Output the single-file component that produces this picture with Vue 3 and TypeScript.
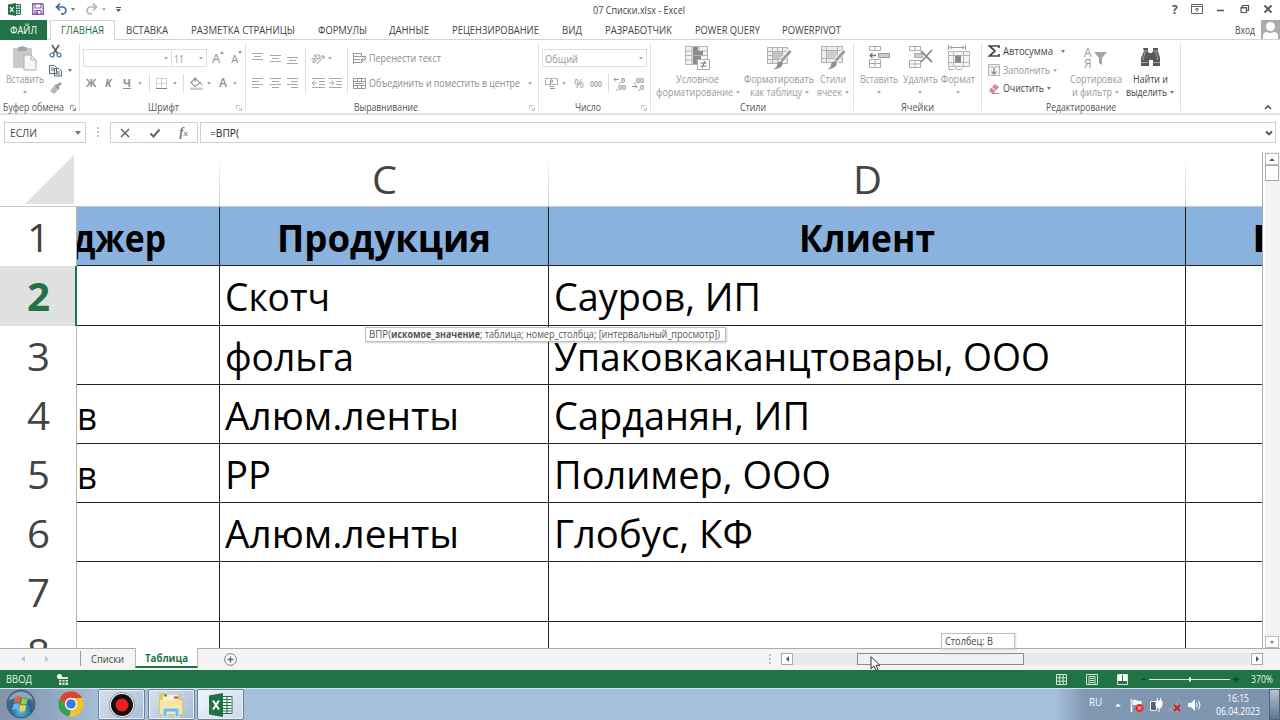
<script setup lang="ts">
import type { Directive } from 'vue'

/* Sets a label to a given advance width so that the chrome keeps its metrics. */
const vFit: Directive<HTMLElement, number> = {
  mounted(el, { value }) {
    const natural = el.getBoundingClientRect().width
    if (!natural) return
    el.style.transform = `scaleX(${value / natural})`
    el.style.marginRight = `${value - natural}px`
  },
}

interface Label { t: string; w: number }
interface Row { n: string; b?: Label; c?: Label; d?: Label; e?: Label }

const tabs: Label[] = [
  { t: 'ВСТАВКА', w: 42 },
  { t: 'РАЗМЕТКА СТРАНИЦЫ', w: 104 },
  { t: 'ФОРМУЛЫ', w: 49 },
  { t: 'ДАННЫЕ', w: 40 },
  { t: 'РЕЦЕНЗИРОВАНИЕ', w: 87 },
  { t: 'ВИД', w: 20 },
  { t: 'РАЗРАБОТЧИК', w: 67 },
  { t: 'POWER QUERY', w: 65 },
  { t: 'POWERPIVOT', w: 59 },
]

const rows: Row[] = [
  { n: '1', b: { t: 'джер', w: 93 }, c: { t: 'Продукция', w: 214 }, d: { t: 'Клиент', w: 136 }, e: { t: 'Н', w: 32 } },
  { n: '2', c: { t: 'Скотч', w: 105 }, d: { t: 'Сауров, ИП', w: 207 } },
  { n: '3', c: { t: 'фольга', w: 129 }, d: { t: 'Упаковкаканцтовары, ООО', w: 496 } },
  { n: '4', b: { t: 'в', w: 20 }, c: { t: 'Алюм.ленты', w: 234 }, d: { t: 'Сарданян, ИП', w: 256 } },
  { n: '5', b: { t: 'в', w: 20 }, c: { t: 'PP', w: 46 }, d: { t: 'Полимер, ООО', w: 277 } },
  { n: '6', c: { t: 'Алюм.ленты', w: 234 }, d: { t: 'Глобус, КФ', w: 199 } },
  { n: '7' },
  { n: '8' },
]
</script>

<template>
  <div class="window">
    <header class="title">
      <svg class="i13" viewBox="0 0 13 13"><path d="M7 1.5h5.5v10H7z" fill="#fff" stroke="#217346" /><path d="M8 4h4M8 6.5h4M8 9h4M10 2v9" stroke="#217346" /><path d="M0 1.5 8 0v13L0 11.5z" fill="#217346" /><path d="m2 4 3.5 5M5.500 4 2 9" stroke="#fff" stroke-width="1.300" /></svg>
      <svg class="i12 ml11" viewBox="0 0 12 12"><path d="M.7.7h9.800l.8.8v9.800H.7z" fill="#fff" stroke="#8a5fa6" stroke-width="1.400" /><path d="M3 1v4h6V1M3 11V7.500h6V11" fill="none" stroke="#8a5fa6" stroke-width="1.200" /><path d="M4 8.500h2V11H4z" fill="#8a5fa6" /></svg>
      <svg class="i12 ml11" viewBox="0 0 12 12"><path d="M1.500 4h6a3.300 3.300 0 0 1 0 6.800H6M5 .7 1.500 4 5 7.300" fill="none" stroke="#3b6fa8" stroke-width="1.700" /></svg>
      <i class="dd dark ml4" />
      <svg class="i12 ml11" viewBox="0 0 12 12"><path d="M10.500 4h-6a3.300 3.300 0 0 0 0 6.800H6M7 .7 10.500 4 7 7.300" fill="none" stroke="#b5b5b5" stroke-width="1.700" /></svg>
      <i class="dd ml4" />
      <svg class="qa" viewBox="0 0 5 5"><path d="M0 .5h5" stroke="#555" /><path d="M0 2h5L2.500 5z" fill="#555" /></svg>
      <span class="doc"><span v-fit="92" class="fit">07 Списки.xlsx - Excel</span></span>
      <div class="winbtns">
        <b class="q">?</b>
        <svg class="i12" viewBox="0 0 12 12"><path d="M.5 1.500h11v9H.5zM.5 3.500h11" fill="none" stroke="#666" /><path d="M6 9V5.500M4 7l2-2 2 2" fill="none" stroke="#666" /></svg>
        <svg class="i10" viewBox="0 0 10 10"><path d="M1 6.500h7" stroke="#555" stroke-width="1.600" /></svg>
        <svg class="i10" viewBox="0 0 10 10"><path d="M2.500 3.500v-2h6v5h-2M1 3.500h5.500v5H1zM1 4h5.500" fill="none" stroke="#555" stroke-width="1.200" /></svg>
        <svg class="i10" viewBox="0 0 10 10"><path d="m1.500 1.500 7 7m0-7-7 7" stroke="#555" stroke-width="1.800" /></svg>
      </div>
    </header>

    <nav class="tabs">
      <div class="file"><span v-fit="27" class="fit">ФАЙЛ</span></div>
      <div class="home"><span v-fit="43" class="fit">ГЛАВНАЯ</span></div>
      <span v-for="t in tabs" :key="t.t" class="tab"><span v-fit="t.w" class="fit">{{ t.t }}</span></span>
      <span class="login"><span v-fit="20" class="fit">Вход</span></span>
      <svg class="avatar" viewBox="0 0 19 19"><path d="M0 0h19v19H0z" fill="#ababab" /><circle cx="9.500" cy="6.500" r="4.500" fill="#fff" /><path d="M2 19v-3q0-4 4-4 3.500 2 7 0 4 0 4 4v3z" fill="#fff" /></svg>
    </nav>

    <section class="ribbon">
      <div class="group clip">
        <div class="body">
          <div class="big w50">
            <svg class="bi" viewBox="0 0 25 26"><path d="M1 3h19v20H1z" fill="#c9c9c9" /><path d="M6 2h3q1.500-3 3 0h3v4H6z" fill="#a5a5a5" /><path d="M12 10h7l5 5v10H12z" fill="#f7f7f7" stroke="#b0b0b0" /><path d="M19 10v5h5" fill="none" stroke="#b0b0b0" /></svg>
            <span class="ln"><span v-fit="38" class="fit">Вставить</span></span>
            <span class="ln"><i class="dd" /></span>
          </div>
          <div class="three">
            <div><svg class="i13" viewBox="0 0 13 13"><path d="m3 0 6 9M10 0 4 9" stroke="#555" stroke-width="1.500" /><circle cx="3" cy="10" r="2" fill="none" stroke="#41719c" stroke-width="1.200" /><circle cx="10" cy="10" r="2" fill="none" stroke="#41719c" stroke-width="1.200" /></svg></div>
            <div><svg class="i13" viewBox="0 0 13 13"><path d="M.5 1.500h5l2 2v6h-7zM5.500 4.500h4.500l2.500 2.500v5h-7z" fill="#fff" stroke="#666" /><path d="M2 4h3M2 6h3M7 8h4M7 10h4" stroke="#41719c" /></svg><i class="dd dark ml6" /></div>
            <div><svg class="i13" viewBox="0 0 13 13"><path d="m12 1-4 3M6 3l4 4" stroke="#999" stroke-width="2.500" /><path d="m5 4 4 4-4 4-4-3z" fill="#b9b9b9" /></svg></div>
          </div>
        </div>
        <div class="cap"><span v-fit="61" class="fit ml3">Буфер обмена</span><svg class="launch on" viewBox="0 0 7 7"><path d="M.5 5V.5H5M3 3l3 3M6.500 3v3.500H3" fill="none" stroke="currentColor" /></svg></div>
      </div>

      <div class="group font">
        <div class="two">
          <div class="r">
            <div class="combo cf"><i class="dd" /></div><div class="combo cs"><span v-fit="10" class="fit">11</span><i class="dd" /></div>
            <span class="let ml5">A</span><i class="tri up" /><span class="let s ml7">A</span><i class="tri dn" />
          </div>
          <div class="r">
            <b class="let k1">Ж</b><b class="let k2"><em>К</em></b><b class="let k3"><u>Ч</u></b><i class="dd ml6" /><i class="vs ml7" />
            <svg class="i11 ml6" viewBox="0 0 11 11"><path d="M.5.5h10v10H.5zM5.500.5v10M.5 5.500h10" fill="none" stroke="#aaa" stroke-dasharray="1 1" /><path d="M0 10.500h11" stroke="#888" /></svg><i class="dd ml6" /><i class="vs ml6" />
            <svg class="i13 ml6" viewBox="0 0 13 13"><path d="m5 1 5 5-5 3.500-4-4zM5 0v5M10 5l2 3" fill="none" stroke="#999" stroke-width="1.200" /><path d="M0 10.500h13V13H0z" fill="#ccc" /></svg><i class="dd ml4" />
            <b class="let fc ml8">А</b><i class="dd ml6" />
          </div>
        </div>
        <div class="cap mid"><span v-fit="31" class="fit nudge">Шрифт</span><svg class="launch" viewBox="0 0 7 7"><path d="M.5 5V.5H5M3 3l3 3M6.500 3v3.500H3" fill="none" stroke="currentColor" /></svg></div>
      </div>

      <div class="group align">
        <div class="two">
          <div class="r">
            <svg class="al ml6" viewBox="0 0 11 12"><path d="M0 1.500h11M2 4.500h7M0 7.500h11" /></svg>
            <svg class="al ml7" viewBox="0 0 11 12"><path d="M0 3.500h11M2 6.500h7M0 9.500h11" /></svg>
            <svg class="al ml6" viewBox="0 0 11 12"><path d="M0 5.500h11M2 8.500h7M0 11.500h11" /></svg>
            <i class="vs tall ml7" />
            <svg class="i13 ml6" viewBox="0 0 13 13"><text x="-1" y="9" font-size="9" fill="#888" transform="rotate(-38 4 7)">ab</text><path d="m5 12 7-8M9 4h3v3" fill="none" stroke="#999" /></svg><i class="dd ml3" /><i class="vs tall ml15" />
            <svg class="i13 ml5" viewBox="0 0 13 13"><path d="M0 1.500h9M0 4.500h13M0 7.500h7M0 10.500h9M.5 1v11M8.500 1v3" fill="none" stroke="#9a9a9a" /><path d="M12 4v4H8M10 6 8 8l2 2" fill="none" stroke="#888" /></svg>
            <span class="g ml3"><span v-fit="72" class="fit">Перенести текст</span></span>
          </div>
          <div class="r">
            <svg class="al ml6" viewBox="0 0 11 12"><path d="M0 1.500h11M0 4.500h7M0 7.500h11M0 10.500h7" /></svg>
            <svg class="al ml7" viewBox="0 0 11 12"><path d="M0 1.500h11M2 4.500h7M0 7.500h11M2 10.500h7" /></svg>
            <svg class="al ml6" viewBox="0 0 11 12"><path d="M0 1.500h11M4 4.500h7M0 7.500h11M4 10.500h7" /></svg>
            <i class="vs ghost ml7" />
            <svg class="al w13 ml6" viewBox="0 0 13 12"><path d="M0 1.500h13M7 4.500h6M7 7.500h6M0 10.500h13M5 6H0M2.500 3.500 0 6l2.500 2.500" /></svg>
            <svg class="al w13 ml4" viewBox="0 0 13 12"><path d="M0 1.500h13M7 4.500h6M7 7.500h6M0 10.500h13M5 6H0M2.500 3.500 5 6 2.500 8.500" /></svg>
            <i class="vs ghost ml5" />
            <svg class="i13 ml5" viewBox="0 0 13 13"><path d="M.5 1.500h12v10H.5zM.5 4.500h12M.5 8.500h12M4.500 1v3M8.500 1v3M4.500 9v3M8.500 9v3M2 6.500h9" fill="none" stroke="#999" /></svg>
            <span class="g ml3"><span v-fit="151" class="fit">Объединить и поместить в центре</span></span><i class="dd ml8" />
          </div>
        </div>
        <div class="cap"><span v-fit="64" class="fit ml108">Выравнивание</span><svg class="launch" viewBox="0 0 7 7"><path d="M.5 5V.5H5M3 3l3 3M6.500 3v3.500H3" fill="none" stroke="currentColor" /></svg></div>
      </div>

      <div class="group num">
        <div class="two">
          <div class="r"><div class="combo cn"><span v-fit="33" class="fit">Общий</span><i class="dd" /></div></div>
          <div class="r">
            <svg class="i13 ml6" viewBox="0 0 13 13"><path d="M.5 1.500h12v6H.5z" fill="none" stroke="#999" stroke-dasharray="3 1" /><path d="M5.500 7V3h2v2h-2M4 9.500h5M5 11.500h5" fill="none" stroke="#999" /></svg><i class="dd ml4" />
            <span class="pct ml8"><span v-fit="10" class="fit">%</span></span><b class="zeros ml6"><span v-fit="12" class="fit">000</span></b><i class="vs ml6" />
            <svg class="i13 ml5" viewBox="0 0 13 13"><text x="5" y="6" class="dz">,0</text><text x="2" y="13" class="dz">,00</text><path d="M5 2.500H0M2 .5l-2 2 2 2" fill="none" stroke="#999" /></svg>
            <svg class="i13 ml5" viewBox="0 0 13 13"><text x="2" y="6" class="dz">,00</text><text x="6" y="13" class="dz">,0</text><path d="M0 9.500h5M3 7.500l2 2-2 2" fill="none" stroke="#999" /></svg>
          </div>
        </div>
        <div class="cap"><span v-fit="26" class="fit ml36">Число</span><svg class="launch" viewBox="0 0 7 7"><path d="M.5 5V.5H5M3 3l3 3M6.500 3v3.500H3" fill="none" stroke="currentColor" /></svg></div>
      </div>

      <div class="group styles">
        <div class="body">
          <div class="big w88">
            <svg class="bi" viewBox="0 0 25 26"><path d="M.5 1.500h22v18H.5zM.5 6h22M.5 10.500h22M.5 15h22M7 1v18M14 1v18" fill="#f4f4f4" stroke="#b5b5b5" /><path d="M8 2h5v4H8zM8 6h10v4H8zM8 11h8v4H8zM8 15h5v4H8z" fill="#8d8d8d" /><path d="M12.500 14.500h12v10h-12z" fill="#fff" stroke="#aaa" /><path d="M15.500 18h6M15.500 21h6M20 16l-3 7" stroke="#777" /></svg>
            <span class="ln"><span v-fit="43" class="fit">Условное</span></span>
            <span class="ln"><span v-fit="77" class="fit">форматирование</span><i class="dd ml3" /></span>
          </div>
          <div class="big w74">
            <svg class="bi" viewBox="0 0 25 26"><path d="M.5 2.500h20v16H.5zM.5 6.500h20M.5 10.500h20M.5 14.500h20M5.500 2v16M10.500 2v16M15.500 2v16" fill="#eee" stroke="#b0b0b0" /><path d="M6 7h9v7H6z" fill="#c5c5c5" /><path d="m23 6-9 11" stroke="#fff" stroke-width="5" /><path d="m23.500 6-9 10" stroke="#9a9a9a" stroke-width="2.800" /><path d="M14 16q3 1 1 5-4 4-9 3 4-1 4-4t4-4z" fill="#8f8f8f" /></svg>
            <span class="ln"><span v-fit="70" class="fit">Форматировать</span></span>
            <span class="ln"><span v-fit="52" class="fit">как таблицу</span><i class="dd ml3" /></span>
          </div>
          <div class="big w36">
            <svg class="bi" viewBox="0 0 25 26"><path d="M.5 1.500h21v16H.5zM.5 5.500h21M.5 13.500h21M5.500 1v17M16.500 1v17" fill="#eee" stroke="#b0b0b0" /><path d="M6 6h10v7H6z" fill="#cfcfcf" /><path d="m23 6-9 11" stroke="#fff" stroke-width="5" /><path d="m23.500 6-9 10" stroke="#9a9a9a" stroke-width="2.800" /><path d="M14 16q3 1 1 5-4 4-9 3 4-1 4-4t4-4z" fill="#8f8f8f" /></svg>
            <span class="ln"><span v-fit="26" class="fit">Стили</span></span>
            <span class="ln"><span v-fit="25" class="fit">ячеек</span><i class="dd ml3" /></span>
          </div>
        </div>
        <div class="cap mid"><span v-fit="26" class="fit">Стили</span></div>
      </div>

      <div class="group cells">
        <div class="body">
          <div class="big w44">
            <svg class="bi" viewBox="0 0 25 26"><path d="M2.500 1.500h11v4h-11zM8 1v5M2.500 14.500h11v8h-11zM8 14v9M2.500 18.500h11" fill="none" stroke="#aaa" /><path d="M11.500 8.500h11v4h-11z" fill="#ccc" stroke="#999" /><path d="M9 10.500H3M5.500 8 3 10.500 5.500 13" fill="none" stroke="#777" stroke-width="1.300" /></svg>
            <span class="ln"><span v-fit="38" class="fit">Вставить</span></span>
            <span class="ln"><i class="dd" /></span>
          </div>
          <div class="big w38">
            <svg class="bi" viewBox="0 0 25 26"><path d="M1.500 1.500h11v4h-11zM7 1v5M1.500 15.500h11v7h-11zM7 15v8M1.500 19h11" fill="none" stroke="#aaa" /><path d="M6.500 8.500h8v4h-8z" fill="#ccc" stroke="#aaa" /><path d="m13 6 11 11M24 5 13 17" stroke="#8b8b8b" stroke-width="1.800" /></svg>
            <span class="ln"><span v-fit="35" class="fit">Удалить</span></span>
            <span class="ln"><i class="dd" /></span>
          </div>
          <div class="big w38">
            <svg class="bi" viewBox="0 0 25 26"><path d="M2.500 0v5M19.500 0v5M4 2.500h14M6 .5l-2 2 2 2M16 .5l2 2-2 2" fill="none" stroke="#999" /><path d="M2.500 6.500h21v15h-21zM2.500 10.500h21M2.500 17.500h21M7.500 6v16M17.500 6v16" fill="#f5f5f5" stroke="#b5b5b5" /><path d="M9 10.500h6v7H9z" fill="#888" /><path d="M3 22.500v2h5l1.500-2 1.500 2h4l2-2" fill="none" stroke="#aaa" /></svg>
            <span class="ln"><span v-fit="34" class="fit">Формат</span></span>
            <span class="ln"><i class="dd" /></span>
          </div>
        </div>
        <div class="cap"><span v-fit="33" class="fit ml47">Ячейки</span></div>
      </div>

      <div class="group edit">
        <div class="body">
          <div class="three e3">
            <div><svg class="i12" viewBox="0 0 12 12"><path d="M11 3V1H1.500L7 6l-5.500 5H11V9" fill="none" stroke="#444" stroke-width="1.700" /></svg><span v-fit="50" class="fit dk ml3">Автосумма</span><i class="dd dark ml8" /></div>
            <div><svg class="i12" viewBox="0 0 12 12"><path d="M.5.5h11v11H.5zM.5 3h11" fill="#f3f3f3" stroke="#b5b5b5" /><path d="M6 4v6M3.500 7.500 6 10l2.500-2.500" fill="none" stroke="#888" stroke-width="1.300" /></svg><span v-fit="47" class="fit ml3">Заполнить</span><i class="dd ml3" /></div>
            <div><svg class="i12" viewBox="0 0 12 12"><path d="m7 1 4 3-5 6H3L1 7z" fill="#d98a9e" /><path d="m3.500 4 4 3.500" stroke="#fff" /><path d="M4 10.500h7" stroke="#888" /></svg><span v-fit="41" class="fit dk ml3">Очистить</span><i class="dd dark ml3" /></div>
          </div>
          <div class="big w60">
            <svg class="bi" viewBox="0 0 25 26"><text x="1" y="12" class="az">А</text><text x="1" y="23" class="az">Я</text><path d="M11 7h13l-5 6v7l-3-2v-5z" fill="#a5a5a5" /></svg>
            <span class="ln"><span v-fit="52" class="fit">Сортировка</span></span>
            <span class="ln"><span v-fit="40" class="fit">и фильтр</span><i class="dd ml3" /></span>
          </div>
          <div class="big find dk">
            <svg class="bi" viewBox="0 0 25 26"><path d="M5 3h5v3l1 2h3l1-2V3h5v3l2 7v8h-7v-6h-4v6H3v-8l3-7z" fill="#595959" /><path d="M3 17.500h7M15 17.500h7M5 6h5M15 6h5M7 7l-2 8M18 7l2 8" stroke="#bbb" stroke-width=".8" /></svg>
            <span class="ln"><span v-fit="35" class="fit">Найти и</span></span>
            <span class="ln"><span v-fit="41" class="fit">выделить</span><i class="dd dark ml3" /></span>
          </div>
        </div>
        <div class="cap"><span v-fit="70" class="fit ml64">Редактирование</span></div>
      </div>
      <svg class="collapse" viewBox="0 0 8 6"><path d="m1 5 3-3 3 3" fill="none" stroke="#555" stroke-width="1.600" /></svg>
    </section>

    <section class="formula">
      <div class="fbox name"><span v-fit="27" class="fit">ЕСЛИ</span><i class="dd dark big5" /></div>
      <svg class="dots" viewBox="0 0 3 12"><path d="M1 2h1.500M1 6h1.500M1 10h1.500" stroke="#999" stroke-width="1.500" /></svg>
      <div class="fbox fb">
        <svg class="i10" viewBox="0 0 10 10"><path d="m1 1 8 8m0-8L1 9" stroke="#666" stroke-width="1.500" /></svg>
        <svg class="i10" viewBox="0 0 10 10"><path d="m.5 5.500 3 3 6-7" fill="none" stroke="#666" stroke-width="2" /></svg>
        <i class="fx">f<small>x</small></i>
      </div>
      <div class="fbox input"><span v-fit="29" class="fit">=ВПР(</span><svg class="i7" viewBox="0 0 8 8"><path d="m1 2.500 3 3 3-3" fill="none" stroke="#555" stroke-width="1.800" /></svg></div>
    </section>

    <main class="sheet">
      <div class="grid">
        <div class="heads">
          <div class="corner"><svg viewBox="0 0 49 49"><path d="M49 0v49H0z" fill="#e0e0e0" /></svg></div>
          <div class="h cb" /><div class="h cc"><span v-fit="25" class="fit">C</span></div><div class="h cd"><span v-fit="29" class="fit">D</span></div><div class="h ce" />
        </div>
        <div v-for="(r, i) in rows" :key="r.n" class="row" :class="{ head: i === 0, active: i === 1, tall: i === 1 || i === 6 }">
          <div class="rn"><span v-fit="23" class="fit">{{ r.n }}</span></div>
          <div class="c cb"><span v-if="r.b" v-fit="r.b.w" class="fit">{{ r.b.t }}</span></div>
          <div class="c cc"><span v-if="r.c" v-fit="r.c.w" class="fit">{{ r.c.t }}</span></div>
          <div class="c cd"><span v-if="r.d" v-fit="r.d.w" class="fit">{{ r.d.t }}</span></div>
          <div class="c ce"><span v-if="r.e" v-fit="r.e.w" class="fit">{{ r.e.t }}</span></div>
        </div>
      </div>
      <div class="vscroll">
        <div class="sb"><i class="dd upw" /></div><div class="vthumb" /><div class="vtrack" /><div class="sb"><i class="dd dark" /></div>
      </div>
      <div class="hint"><span v-fit="22" class="fit">ВПР(</span><b v-fit="89" class="fit">искомое_значение</b><span v-fit="240" class="fit">; таблица; номер_столбца; [интервальный_просмотр])</span></div>
    </main>

    <footer class="sheets">
      <svg class="nav" viewBox="0 0 28 8"><path d="M4 1v6L0 4zM24 1v6l4-3z" fill="#c2c2c2" /></svg>
      <div class="st"><span v-fit="33" class="fit">Списки</span></div>
      <div class="st on"><span v-fit="43" class="fit">Таблица</span></div>
      <svg class="plus" viewBox="0 0 13 13"><circle cx="6.500" cy="6.500" r="5.800" fill="#fff" stroke="#777" /><path d="M6.500 3.500v6M3.500 6.500h6" stroke="#666" stroke-width="1.400" /></svg>
      <svg class="dots hd" viewBox="0 0 3 12"><path d="M1 2h1.500M1 6h1.500M1 10h1.500" stroke="#999" stroke-width="1.500" /></svg>
      <div class="hb"><i class="side l" /></div>
      <div class="htrack"><div class="hthumb" /></div>
      <div class="hb"><i class="side rr" /></div>
      <div class="coltip"><span v-fit="48" class="fit">Столбец: B</span></div>
      <svg class="cursor" viewBox="0 0 11 16"><path d="M1 .8v12l3-2.800 2 4.500 2-1-2-4.200h4z" fill="#fff" stroke="#333" /></svg>
    </footer>

    <div class="status">
      <span v-fit="26" class="fit ml6">ВВОД</span>
      <svg class="macro" viewBox="0 0 11 11"><path d="M2 3h9v8H2z" fill="#dcebe1" /><path d="M2 5.500h9M2 8h9M5 5v6M8 5v6" stroke="#217346" /><circle cx="2.500" cy="2.500" r="2.500" fill="#fff" /></svg>
      <svg class="views" viewBox="0 0 72 11"><path d="M.5.5h10v10H.5zM0 3.800h11M0 7.200h11M3.800 0v11M7.200 0v11M30.500.5h11v10h-11zM33 2.500h6v8h-6zM34 4.500h4M34 6.500h4M34 8.500h4M61.500.5h10v10h-10z" fill="none" stroke="#d6e8dc" /><path d="M62 1h4v6h-4zM67 1h4v6h-4z" fill="#fff" /></svg>
      <svg class="slider" viewBox="0 0 98 11"><path d="M0 5.500h5M92 5.500h6M95 2.500v6" stroke="#0e4a28" stroke-width="1.500" /><path d="M8 5.500h81" stroke="#d6e8dc" /><path d="M49 3.500v4" stroke="#fff" stroke-width="2" /></svg>
      <span v-fit="22" class="fit zoom">370%</span>
    </div>

    <div class="taskbar">
      <svg class="start" viewBox="0 0 30 30">
        <defs><radialGradient id="orb" cx=".5" cy=".75" r=".75"><stop offset="0" stop-color="#5cc3ee" /><stop offset=".5" stop-color="#24658f" /><stop offset="1" stop-color="#5f7f99" /></radialGradient></defs>
        <circle cx="15" cy="15" r="14" fill="url(#orb)" stroke="#40566b" /><path d="M3 11a13 13 0 0 1 24 0q-12-5-24 0z" fill="#c3d3df" opacity=".55" />
        <path d="M9 8q3-2 6 0l-1.500 6q-3-1.500-6 0z" fill="#e8653a" /><path d="M16 8.500q3 2 6 .5l-1.500 6q-3 1-6-.5z" fill="#9cc648" /><path d="M7.500 15q3-1.500 6 0L12 21q-3-1.500-6 0z" fill="#67b6e8" /><path d="M14.300 15.500q3 1.500 6 .5L19 22q-3 1-6-.5z" fill="#f8cf46" />
      </svg>
      <svg class="chrome" viewBox="0 0 26 26"><circle cx="13" cy="13" r="12.700" fill="#f2c230" /><path d="M2 6.700A12.700 12.700 0 0 1 24.200 7H13l-5.200 9z" fill="#dc4437" /><path d="M2 6.700 7.800 16 13 19l-2 6.600A12.700 12.700 0 0 1 2 6.700z" fill="#36a154" /><circle cx="13" cy="13" r="6.200" fill="#fff" /><circle cx="13" cy="13" r="4.800" fill="#3c7be0" /></svg>
      <div class="task"><svg class="i26" viewBox="0 0 26 26"><circle cx="13" cy="13" r="12.500" fill="#fff" stroke="#777" stroke-width=".8" /><circle cx="13" cy="13" r="11" fill="#111" /><circle cx="13" cy="13" r="6.500" fill="#ee1c1c" /></svg></div>
      <div class="task"><svg class="i26" viewBox="0 0 26 26"><path d="M1 3q0-2 2-2h5l2 2h12v4h3v16H1z" fill="#e6c560" /><path d="M5 3h15v5H5z" fill="#f8f4da" /><path d="M6 3.500h3" stroke="#45a34b" stroke-width="2" /><path d="M16 5.500h4" stroke="#d34b3e" stroke-width="2" /><path d="M2 8h22v14H2z" fill="#f7e69d" /><path d="M5 25v-7q0-2 2-2h12q2 0 2 2v7h-4v-5H9v5z" fill="#72bce2" stroke="#d5effa" /></svg></div>
      <div class="task light"><svg class="i26" viewBox="0 0 26 26"><path d="M13 4.500h11v17H13z" fill="#fff" stroke="#217346" /><path d="M15 7.500h8M15 10.500h8M15 13.500h8M15 16.500h8M15 19h8M19 5v16" stroke="#217346" stroke-width="1.100" /><path d="m1 3.500 14-2.500v24L1 22.500z" fill="#1f7244" /><path d="m5 8.500 6 9M11 8.500l-6 9" stroke="#fff" stroke-width="2" /></svg></div>
      <div class="tray">
        <span v-fit="13" class="fit ru">RU</span>
        <svg class="trayicons" viewBox="0 0 84 14">
          <path d="M-2 8.500h6L1 5.500z" fill="#fff" />
          <path d="M14.500 1v13" stroke="#fff" stroke-width="1.500" /><path d="M15 2q3-1.500 5 0t5 0v6q-2 1.500-5 0t-5 0z" fill="#f5f5f5" stroke="#677" stroke-width=".5" /><circle cx="22.500" cy="10" r="4" fill="#d8322b" /><path d="m21 8.500 3 3m0-3-3 3" stroke="#fff" />
          <path d="M33.500 3.500h6v9h-6z" fill="#536579" stroke="#eee" /><path d="M39 3h6v4q0 3-3 3t-3-3zM40.500 0v3M43.500 0v3M42 10v4" fill="#fff" stroke="#fff" />
          <path d="M52 11h2v2h-2zM55 9h2v4h-2zM58 6h2v7h-2zM61 3h2v10h-2z" fill="#5e6c7c" stroke="#ccd4dc" stroke-width=".5" /><path d="m57 7 6 6m0-6-6 6" stroke="#d3221f" stroke-width="2.200" />
          <path d="M71 5h3l4-4v12l-4-4h-3z" fill="#fff" /><path d="M79.500 4.500q1.500 2.500 0 5M81.500 2.500q3 4.500 0 9" fill="none" stroke="#fff" />
        </svg>
        <div class="clock"><span v-fit="22" class="fit">16:15</span><span v-fit="44" class="fit">06.04.2023</span></div>
        <div class="show" />
      </div>
    </div>
  </div>
</template>

<style>
html, body { overflow: hidden; background: #fff; }
</style>

<style scoped>
* { box-sizing: border-box; }
.window { width: 1280px; height: 720px; display: flex; flex-direction: column; overflow: hidden; background: #fff; font: 10.5px/13px "Open Sans", "Noto Sans", sans-serif; color: #444; }
.fit { display: inline-block; white-space: pre; transform-origin: 0 50%; flex: none; }
svg { display: block; flex: none; overflow: visible; }
.i7 { width: 8px; height: 8px; } .i10 { width: 10px; height: 10px; } .i11 { width: 11px; height: 11px; }
.i12 { width: 12px; height: 12px; } .i13 { width: 13px; height: 13px; } .i26 { width: 26px; height: 26px; }
.ml3 { margin-left: 3px; } .ml4 { margin-left: 4px; } .ml5 { margin-left: 5px; } .ml6 { margin-left: 6px; }
.ml7 { margin-left: 7px; } .ml8 { margin-left: 8px; } .ml11 { margin-left: 11px; } .ml15 { margin-left: 15px; }
.ml36 { margin-left: 36px; } .ml47 { margin-left: 47px; } .ml64 { margin-left: 64px; } .ml108 { margin-left: 108px; }
.dd { flex: none; width: 0; height: 0; border: 2.500px solid transparent; border-top: 3px solid #b0b0b0; border-bottom: 0; }
.dd.dark { border-top-color: #777; }
.dk { color: #444; }

.title { height: 20px; flex: none; display: flex; align-items: center; padding: 0 7px 2px 8px; }
.qa { width: 5px; height: 5px; margin-left: 10px; }
.doc { margin-left: 472px; padding-top: 3px; }
.winbtns { margin-left: auto; display: flex; align-items: center; gap: 13.300px; }
.q { font-size: 12px; color: #555; }

.tabs { height: 20px; flex: none; display: flex; border-bottom: 1px solid #d4d4d4; font-size: 10.5px; line-height: 20px; }
.file { width: 47px; height: 20px; background: #217346; color: #fff; padding-left: 10px; }
.home { width: 65px; height: 20px; margin: 0 12px 0 3px; background: #fff; border: 1px solid #d4d4d4; border-bottom: 0; padding-left: 10px; color: #217346; line-height: 18px; }
.tab { margin-right: 22.800px; }
.tab:nth-child(3) { margin-left: -1px; }
.login { margin-left: auto; margin-right: 6px; }
.avatar { width: 19px; height: 19px; }

.ribbon { height: 75px; flex: none; display: flex; border-bottom: 2px solid #e3e3e3; color: #999; }
.group { display: flex; flex-direction: column; position: relative; background: linear-gradient(#e1e1e1, #e1e1e1) right 4px / 1px 67px no-repeat; }
.clip { width: 80px; } .font { width: 166px; } .align { width: 293px; } .num { width: 112px; } .styles { width: 203px; } .cells { width: 128px; } .edit { width: 199px; }
.body { height: 61px; display: flex; padding-top: 2px; }
.cap { height: 13px; display: flex; align-items: center; color: #555; padding-top: 1px; }
.cap.mid { justify-content: center; }
.nudge { margin-left: -16px; }
.font .nudge { position: relative; left: 8px; }
.launch { width: 6px; height: 6px; position: absolute; right: 4px; bottom: 2px; color: #bbb; }
.launch.on { color: #777; }
.big { display: flex; flex-direction: column; align-items: center; padding-top: 3px; }
.bi { width: 25px; height: 26px; margin-bottom: 2px; }
.ln { height: 13px; display: flex; align-items: center; }
.w50 { width: 49px; } .w88 { width: 91px; } .w74 { width: 72px; } .w36 { width: 36px; } .w44 { width: 50px; } .w38 { width: 39px; } .w60 { width: 55px; }
.find { width: 53px; padding-left: 1px; }
.styles .body { padding-left: 1px; }
.cells .w38:nth-child(2) { width: 32px; } .cells .w38:nth-child(3) { width: 44px; }
.three { display: flex; flex-direction: column; }
.three > div { height: 18.700px; display: flex; align-items: center; }
.e3 { width: 86px; padding-left: 6px; }
.two { height: 61px; padding-top: 8px; display: flex; flex-direction: column; gap: 5px; }
.r { height: 20px; display: flex; align-items: center; }
.combo { height: 18px; border: 1px solid #dedede; display: flex; align-items: center; justify-content: space-between; padding: 0 3px 0 2px; font-size: 11px; }
.cf { width: 89px; margin-left: 3px; justify-content: flex-end; } .cs { width: 35px; border-left: 0; } .cn { width: 105px; margin-left: 3px; }
.let { font-size: 13px; line-height: 14px; color: #8f8f8f; }
.let.s { font-size: 11px; padding-top: 2px; }
.let.fc { font-weight: 600; font-size: 12px; }
.tri { width: 0; height: 0; border: 2px solid transparent; margin-top: -12px; }
.tri.up { border-bottom: 3px solid #999; border-top: 0; } .tri.dn { border-top: 3px solid #999; border-bottom: 0; }
.k1 { width: 12px; margin-left: 6px; font-size: 11px; } .k2 { width: 10px; margin-left: 7px; font-size: 11px; } .k3 { width: 9px; margin-left: 8px; font-size: 11px; }
.vs { width: 1px; height: 18px; background: #ddd; flex: none; }
.vs.tall { height: 45px; position: relative; top: 12px; } .vs.ghost { background: none; }
.al { width: 11px; height: 12px; fill: none; stroke: #a8a8a8; } .al.w13 { width: 13px; }
.g { color: #8c8c8c; }
.pct { font-size: 13px; } .zeros { font-size: 9px; font-weight: 600; } .dz { font-size: 7px; font-weight: 700; fill: #999; } .az { font-size: 12px; fill: #999; }
.collapse { width: 8px; height: 6px; margin: 64px 0 0 83px; }

.formula { height: 37px; flex: none; display: flex; padding: 7px 0 0 4px; }
.fbox { height: 21px; border: 1px solid #d0d0d0; display: flex; align-items: center; padding-top: 1px; }
.name { width: 82px; padding: 1px 4px 0 5px; justify-content: space-between; }
.big5 { border-width: 3px; border-top-width: 4px; border-bottom: 0; }
.dots { width: 3px; height: 12px; margin: 4px 0 0 10px; }
.fb { width: 88px; margin-left: 11px; padding: 0 9px; justify-content: space-between; }
.fx { font: italic 700 13px/14px "Liberation Serif", serif; color: #777; } .fx small { font-size: 9px; }
.input { width: 1076px; margin-left: 2px; padding: 1px 2px 0 9px; justify-content: space-between; color: #222; }

.sheet { height: 496px; flex: none; display: flex; position: relative; }
.grid { width: 1263px; overflow: hidden; display: flex; flex-direction: column; border-right: 1px solid #aaa; }
.heads { height: 55px; flex: none; display: flex; border-bottom: 1px solid #c6c6c6; font-size: 39px; line-height: 54px; }
.corner { width: 77px; flex: none; padding: 3px 0 0 25px; } .corner svg { width: 49px; height: 49px; }
.h { text-align: center; background: linear-gradient(#fff, #ccc) right / 1px 100% no-repeat; }
.cb { width: 143px; flex: none; } .cc { width: 329px; flex: none; } .cd { width: 637px; flex: none; } .ce { width: 80px; flex: none; }
.row { height: 59px; flex: none; display: flex; font: 38px/60px "Open Sans", "Noto Sans", sans-serif; color: #000; }
.row.tall { height: 60px; }
.rn { width: 77px; flex: none; border-right: 1px solid #b5b5b5; font: 39px/60px "Open Sans", sans-serif; color: #444; padding-left: 27px; }
.c { border-right: 1px solid #222; border-bottom: 1px solid #222; padding-left: 5px; overflow: hidden; }
.c.cb { padding-left: 0; }
.head .c { background: #8ab2df; font-weight: 700; text-align: center; padding-left: 0; }
.head .c.cb { text-align: left; padding-left: 0; } .head .cb .fit { margin-left: -4px; } .head .c.ce { text-align: left; padding-left: 66px; }
.active .rn { background: #e0e0e0; color: #217346; font-weight: 700; border-right: 2px solid #217346; }
.vscroll { width: 17px; padding: 1px 1px 0 2px; display: flex; flex-direction: column; background: linear-gradient(90deg, #fff 2px, #f3f3f3 2px); }
.sb { height: 12px; flex: none; border: 1px solid #bbb; background: #fff; display: flex; align-items: center; justify-content: center; }
.upw { border: 3px solid transparent; border-bottom: 3px solid #666; border-top: 0; }
.vthumb { height: 16px; flex: none; border: 1px solid #aaa; background: #fff; } .vtrack { flex: 1; }
.hint { position: absolute; left: 365px; top: 175px; width: 361px; height: 15px; background: #fff; border: 1px solid #bcbcbc; box-shadow: 1px 1px 2px #0003; padding-left: 3px; line-height: 12px; font-size: 10px; display: flex; color: #555; }

.sheets { height: 22px; flex: none; position: relative; display: flex; background: #f4f4f4; border-top: 1px solid #ababab; line-height: 19px; }
.nav { width: 28px; height: 8px; margin: 6px 0 0 21px; }
.st { height: 19px; } .st:nth-child(2) { margin-left: 31px; padding: 0 11px 0 10px; border-left: 1px solid #999; margin-top: 2px; height: 15px; line-height: 16px; }
.st.on { width: 63px; margin-top: -1px; height: 20px; background: #fff; border: solid #bbb; border-width: 0 1px; border-bottom: 2px solid #217346; padding-left: 9px; font-weight: 700; color: #217346; line-height: 21px; }
.plus { width: 13px; height: 13px; margin: 4px 0 0 26px; }
.hd { margin: 4px 0 0 531px; }
.hb { width: 12px; height: 12px; margin-top: 4px; border: 1px solid #aaa; background: #fff; display: flex; align-items: center; justify-content: center; flex: none; }
.hd + .hb { margin-left: 10px; }
.side { border: 3px solid transparent; } .side.l { border-right: 3px solid #555; border-left: 0; } .side.rr { border-left: 3px solid #555; border-right: 0; }
.htrack { width: 457px; height: 12px; margin: 4px 1px 0 0; padding-left: 64px; background: #e9e9e9; }
.hthumb { width: 167px; height: 12px; border: 1px solid #8c8c8c; background: #f0f0f0; }
.coltip { position: absolute; left: 941px; top: -16px; width: 74px; height: 16px; border: 1px solid #bcbcbc; background: #fff; line-height: 14px; font-size: 10px; padding-left: 3px; box-shadow: 1px 1px 2px #0002; }
.cursor { position: absolute; left: 870px; top: 7px; width: 11px; height: 16px; z-index: 2; }

.status { height: 18px; flex: none; display: flex; align-items: center; background: #217346; color: #e6f1ea; }
.macro { width: 11px; height: 11px; margin-left: 25px; }
.views { width: 72px; height: 11px; margin-left: auto; } .slider { width: 98px; height: 11px; margin-left: 13px; }
.zoom { margin-left: 12px; } .status::after { content: ""; width: 7px; }
.taskbar { height: 32px; display: flex; border-top: 1px solid #d4e1ef; background: linear-gradient(90deg, #8194ab, #8ea3bd 45px, #a6bfdb 100px, #a6bfdb 1055px, #8098b2 1085px, #7c93ad); }
.start { width: 30px; height: 30px; margin-left: 6px; }
.chrome { width: 26px; height: 26px; margin: 2px 14px 0 22px; }
.task { width: 47px; height: 31px; margin-right: 2.500px; border: 1px solid #6f8299; border-radius: 2px; background: linear-gradient(135deg, #d5e1ef, #a9bdd5); box-shadow: inset 0 0 0 1px #e6eef7; display: flex; align-items: center; justify-content: center; }
.task.light { background: linear-gradient(135deg, #f0f5fa, #cbd9e9); }
.tray { margin-left: auto; display: flex; color: #fff; }
.ru { margin-top: 7px; } .trayicons { width: 84px; height: 14px; margin: 9px 0 0 15px; }
.clock { width: 44px; margin: 3px 9px 0 15px; display: flex; flex-direction: column; align-items: center; font-size: 10px; }
.show { width: 11px; height: 31px; border: 1px solid #4f637b; background: linear-gradient(#b4c2d2, #62768e); }
</style>
